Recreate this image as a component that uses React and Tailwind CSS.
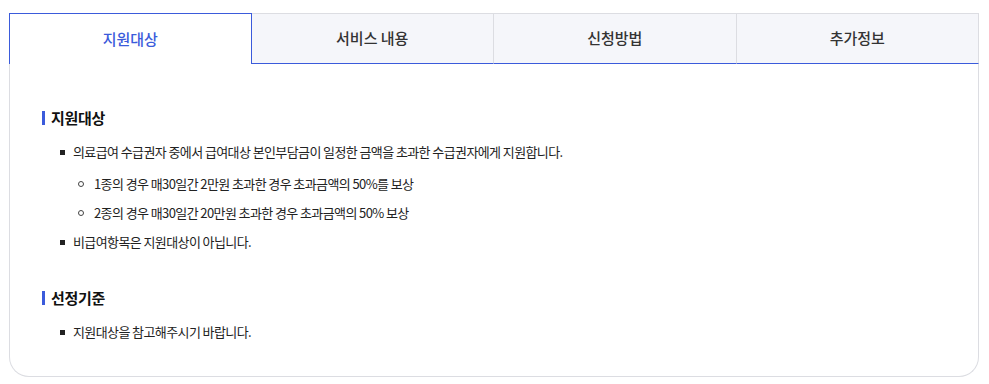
import React, { useState } from "react";

const tabs = ["지원대상", "서비스 내용", "신청방법", "추가정보"];

const Heading = ({ children }) => (
  <h3 className="flex items-center text-[15px] font-bold text-[#111] leading-[22px] tracking-[-0.3px]">
    <span className="inline-block w-[3px] h-[14px] bg-[#3b5bdb] mr-[6px]" />
    {children}
  </h3>
);

const Item = ({ children }) => (
  <li className="flex items-center text-[13px] text-[#222] leading-[20px] tracking-[-0.6px]">
    <span className="w-[5px] h-[5px] bg-[#222] ml-[18px] mr-[8px] shrink-0" />
    {children}
  </li>
);

const SubItem = ({ children }) => (
  <li className="flex items-center text-[13px] text-[#222] leading-[20px] tracking-[-0.6px]">
    <span className="w-[6px] h-[6px] rounded-full border border-[#444] ml-[36px] mr-[10px] shrink-0" />
    {children}
  </li>
);

export default function App() {
  const [active, setActive] = useState(0);

  return (
    <div
      className="bg-white min-h-[384px] pt-[13px] pl-[9px]"
      style={{ fontFamily: '"Noto Sans CJK KR", "Noto Sans", sans-serif' }}
    >
      <div className="w-[970px]">
        <div className="grid grid-cols-4 h-[51px]">
          {tabs.map((t, i) => (
            <button
              key={t}
              onClick={() => setActive(i)}
              className={
                i === active
                  ? "bg-white border-t border-x border-[#3b5bdb] text-[#3b5bdb] text-[15px] font-medium"
                  : "bg-[#f5f6fa] border-t border-r border-[#dcdde2] border-b border-b-[#3b5bdb] text-[#333] text-[15px] font-medium"
              }
            >
              {t}
            </button>
          ))}
        </div>
        <div className="border-x border-b border-[#dcdde2] rounded-b-[20px] h-[313px] pt-[43px] pl-[32px]">
          <Heading>지원대상</Heading>
          <ul className="mt-[13px]">
            <Item>의료급여 수급권자 중에서 급여대상 본인부담금이 일정한 금액을 초과한 수급권자에게 지원합니다.</Item>
          </ul>
          <ul className="mt-[12px] flex flex-col gap-[9px]">
            <SubItem>1종의 경우 매30일간 2만원 초과한 경우 초과금액의 50%를 보상</SubItem>
            <SubItem>2종의 경우 매30일간 20만원 초과한 경우 초과금액의 50% 보상</SubItem>
          </ul>
          <ul className="mt-[9px]">
            <Item>비급여항목은 지원대상이 아닙니다.</Item>
          </ul>
          <div className="mt-[35px]">
            <Heading>선정기준</Heading>
          </div>
          <ul className="mt-[13px]">
            <Item>지원대상을 참고해주시기 바랍니다.</Item>
          </ul>
        </div>
      </div>
    </div>
  );
}
